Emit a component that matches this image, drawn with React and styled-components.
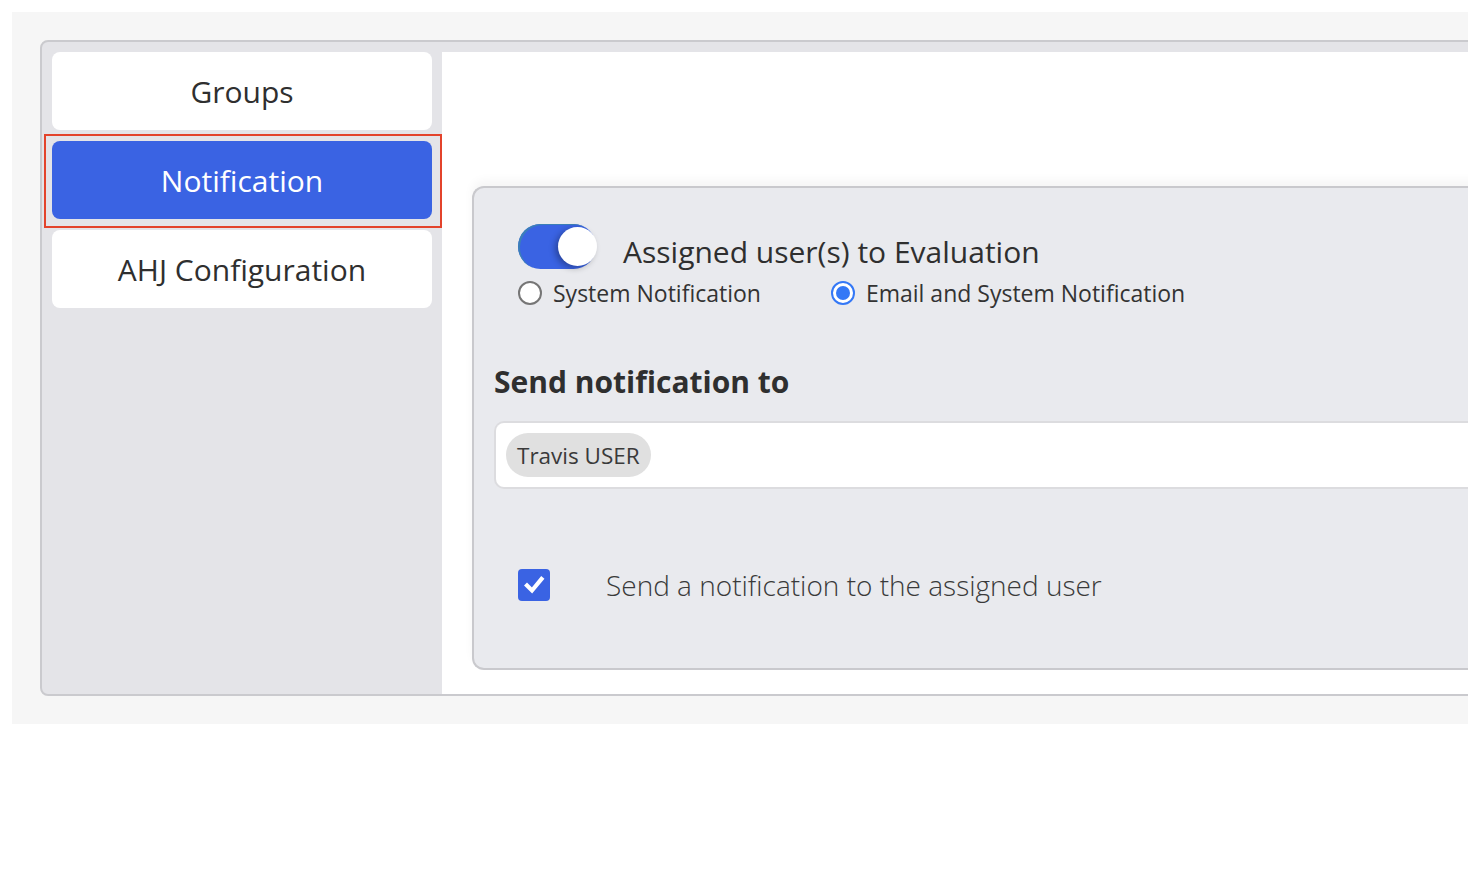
import React, { useState } from "react";
import styled, { createGlobalStyle } from "styled-components";

const GlobalStyle = createGlobalStyle`
  html, body {
    margin: 0;
    padding: 0;
    background: #ffffff;
    overflow: hidden;
    font-family: "Open Sans", "Noto Sans", sans-serif;
    color: #333333;
  }
`;

const tabs = ["Groups", "Notification", "AHJ Configuration"];

const App = () => {
  const [active, setActive] = useState(1);
  const [enabled, setEnabled] = useState(true);
  const [mode, setMode] = useState("email");
  const [sendAssigned, setSendAssigned] = useState(true);

  return (
    <>
      <GlobalStyle />
      <Page>
        <Frame>
          <Sidebar>
            {tabs.map((tab, index) => (
              <TabSlot key={tab} $active={index === active}>
                <Tab $active={index === active} onClick={() => setActive(index)}>
                  {tab}
                </Tab>
              </TabSlot>
            ))}
          </Sidebar>
          <Panel>
            <Card>
              <ToggleBlock>
                <ToggleRow>
                  <Switch $on={enabled} onClick={() => setEnabled(!enabled)}>
                    <Knob $on={enabled} />
                  </Switch>
                  <ToggleLabel>Assigned user(s) to Evaluation</ToggleLabel>
                </ToggleRow>
                <RadioRow>
                  <RadioOption onClick={() => setMode("system")}>
                    <Radio $checked={mode === "system"} />
                    System Notification
                  </RadioOption>
                  <RadioOption onClick={() => setMode("email")}>
                    <Radio $checked={mode === "email"} />
                    Email and System Notification
                  </RadioOption>
                </RadioRow>
              </ToggleBlock>

              <Heading>Send notification to</Heading>
              <TagInput>
                <Chip>Travis USER</Chip>
              </TagInput>

              <CheckRow onClick={() => setSendAssigned(!sendAssigned)}>
                <CheckBox $checked={sendAssigned}>
                  {sendAssigned && (
                    <svg width="24" height="24" viewBox="0 0 24 24">
                      <path
                        d="M5 12.5 L10 17.5 L19.5 6"
                        fill="none"
                        stroke="#ffffff"
                        strokeWidth="4.2"
                        strokeLinecap="square"
                      />
                    </svg>
                  )}
                </CheckBox>
                <CheckLabel>Send a notification to the assigned user</CheckLabel>
              </CheckRow>
            </Card>
          </Panel>
        </Frame>
      </Page>
    </>
  );
};

const Page = styled.div`
  margin: 12px 0 0 12px;
  width: 1700px;
  height: 712px;
  background: #f6f6f6;
  padding: 28px 0 0 28px;
  box-sizing: border-box;
`;

const Frame = styled.div`
  display: flex;
  align-items: stretch;
  gap: 10px;
  height: 656px;
  box-sizing: border-box;
  padding: 10px 0 0 10px;
  background: #e4e4e8;
  border: 2px solid #cacace;
  border-radius: 8px 0 0 8px;
`;

const Sidebar = styled.div`
  width: 380px;
  flex-shrink: 0;
  display: flex;
  flex-direction: column;
  gap: 11px;
`;

const TabSlot = styled.div`
  position: relative;
  &::after {
    content: "";
    display: ${(p) => (p.$active ? "block" : "none")};
    position: absolute;
    left: -8px;
    right: -10px;
    top: -7px;
    bottom: -9px;
    border: 2px solid #e3432b;
    pointer-events: none;
  }
`;

const Tab = styled.div`
  height: 78px;
  display: flex;
  align-items: center;
  justify-content: center;
  border-radius: 8px;
  font-size: 30px;
  cursor: pointer;
  background: ${(p) => (p.$active ? "#3a63e3" : "#ffffff")};
  color: ${(p) => (p.$active ? "#ffffff" : "#2f2f2f")};
`;

const Panel = styled.div`
  flex: 1;
  background: #ffffff;
  padding: 134px 0 24px 30px;
  box-sizing: border-box;
`;

const Card = styled.div`
  height: 484px;
  box-sizing: border-box;
  background: #e9eaee;
  border: 2px solid #c9c9cd;
  border-right: none;
  border-radius: 12px 0 0 12px;
  box-shadow: 0 -6px 10px rgba(0, 0, 0, 0.04);
  padding: 36px 0 0 20px;
  display: flex;
  flex-direction: column;
`;

const ToggleBlock = styled.div`
  padding-left: 24px;
  display: flex;
  flex-direction: column;
`;

const ToggleRow = styled.div`
  display: flex;
  align-items: flex-start;
  gap: 27px;
`;

const Switch = styled.div`
  width: 78px;
  height: 45px;
  border-radius: 23px;
  background: ${(p) => (p.$on ? "#3a63e3" : "#bfbfc4")};
  box-shadow: inset 2px 1px 0 #3b7fb8;
  position: relative;
  cursor: pointer;
  flex-shrink: 0;
`;

const Knob = styled.div`
  position: absolute;
  top: 3px;
  left: ${(p) => (p.$on ? "40px" : "3px")};
  width: 39px;
  height: 39px;
  border-radius: 50%;
  background: #ffffff;
  box-shadow: -3px 2px 6px rgba(0, 0, 0, 0.3);
`;

const ToggleLabel = styled.span`
  font-size: 30px;
  color: #2f2f2f;
  line-height: 40px;
  margin-top: 8px;
`;

const RadioRow = styled.div`
  display: flex;
  align-items: center;
  gap: 70px;
  margin-top: 5px;
`;

const RadioOption = styled.label`
  display: flex;
  align-items: center;
  gap: 11px;
  font-size: 23px;
  color: #333333;
  cursor: pointer;
`;

const Radio = styled.span`
  width: 24px;
  height: 24px;
  box-sizing: border-box;
  border-radius: 50%;
  background: #ffffff;
  border: ${(p) => (p.$checked ? "2px solid #3478f6" : "2px solid #767676")};
  display: flex;
  align-items: center;
  justify-content: center;
  &::after {
    content: "";
    display: ${(p) => (p.$checked ? "block" : "none")};
    width: 14px;
    height: 14px;
    border-radius: 50%;
    background: #3478f6;
  }
`;

const Heading = styled.h2`
  margin: 55px 0 0 0;
  font-size: 30px;
  font-weight: 700;
  color: #2f2f2f;
  line-height: 36px;
`;

const TagInput = styled.div`
  margin-top: 21px;
  height: 68px;
  box-sizing: border-box;
  background: #ffffff;
  border: 2px solid #dcdcdf;
  border-right: none;
  border-radius: 10px 0 0 10px;
  display: flex;
  align-items: center;
  padding-left: 10px;
`;

const Chip = styled.span`
  height: 44px;
  padding: 0 11px;
  border-radius: 22px;
  background: #e0e0e0;
  display: flex;
  align-items: center;
  font-size: 22.5px;
  color: #3a3a3a;
`;

const CheckRow = styled.div`
  margin-top: 78px;
  padding-left: 24px;
  display: flex;
  align-items: center;
  gap: 56px;
  cursor: pointer;
`;

const CheckBox = styled.span`
  width: 32px;
  height: 32px;
  border-radius: 4px;
  background: ${(p) => (p.$checked ? "#3a63e3" : "#ffffff")};
  display: flex;
  align-items: center;
  justify-content: center;
  flex-shrink: 0;
`;

const CheckLabel = styled.span`
  font-size: 28px;
  font-weight: 300;
  line-height: 36px;
  color: #3a3a3a;
`;

export default App;
